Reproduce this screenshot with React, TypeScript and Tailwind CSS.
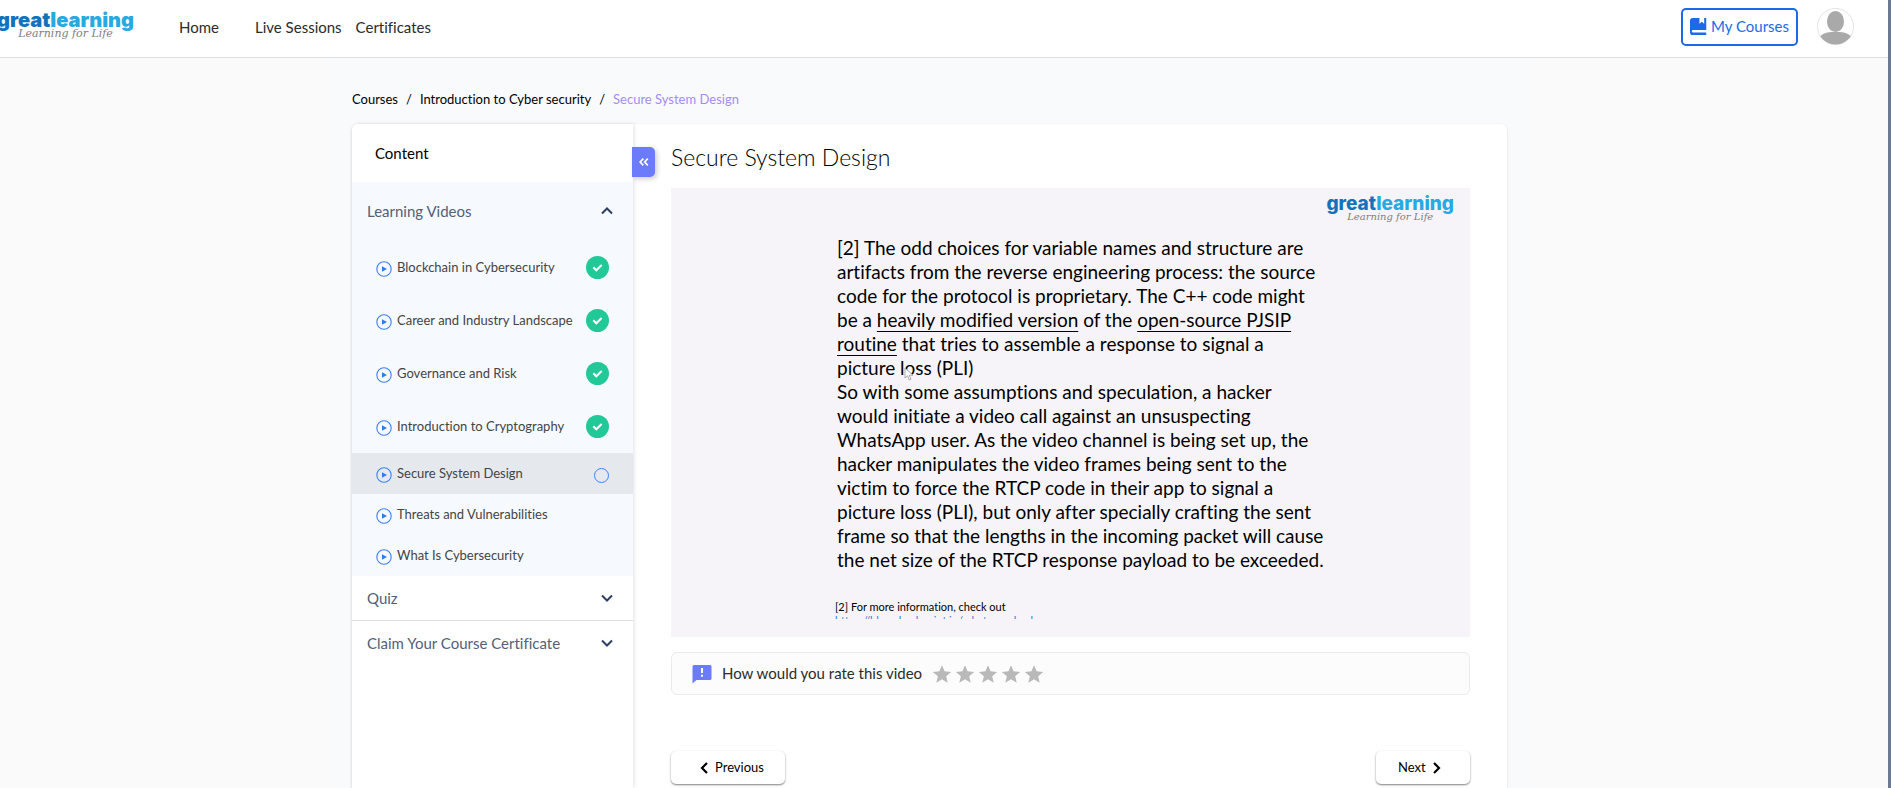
import { useState } from "react";

const videos = [
  { title: "Blockchain in Cybersecurity", done: true },
  { title: "Career and Industry Landscape", done: true },
  { title: "Governance and Risk", done: true },
  { title: "Introduction to Cryptography", done: true },
  { title: "Secure System Design", done: false },
  { title: "Threats and Vulnerabilities", done: false },
  { title: "What Is Cybersecurity", done: false },
];

function Brand({ large = false }: { large?: boolean }) {
  return (
    <span className="flex flex-col items-center whitespace-nowrap">
      <span
        className={
          large
            ? "font-['Inter',sans-serif] text-[20px] leading-[18px] font-black"
            : "font-['Inter',sans-serif] text-[19px] leading-[18px] font-extrabold"
        }
      >
        <span className="text-[#1173bb]">great</span>
        <span className="text-[#27a9e1]">learning</span>
      </span>
      <span
        className={
          large
            ? "font-['DejaVu_Serif',serif] text-[11px] leading-[10px] text-[#808080] italic"
            : "font-['DejaVu_Serif',serif] text-[10px] leading-2 text-[#808080] italic"
        }
      >
        Learning for Life
      </span>
    </span>
  );
}

function PlayIcon() {
  return (
    <svg viewBox="0 0 16 16" className="mt-1 size-4 shrink-0" aria-hidden="true">
      <circle cx="8" cy="8" r="7.2" fill="none" stroke="#3b82f6" strokeWidth="1.1" />
      <path d="M6 5.2v5.6L11 8z" fill="#2f7bf0" />
    </svg>
  );
}

function CheckBadge() {
  return (
    <svg viewBox="0 0 23 23" className="size-[23px] shrink-0" role="img" aria-label="Completed">
      <circle cx="11.5" cy="11.5" r="11.5" fill="#20c997" />
      <path d="M7.3 11.3l3 3L15.7 9" fill="none" stroke="#fff" strokeWidth="2" />
    </svg>
  );
}

function Chevron({ up = false }: { up?: boolean }) {
  return (
    <svg viewBox="0 0 12 8" className="h-2 w-3" fill="none" stroke="#2d3f63" strokeWidth="2" aria-hidden="true">
      <path d={up ? "M1 6.5l5-5 5 5" : "M1 1.5l5 5 5-5"} />
    </svg>
  );
}

function Section({ title, open, onToggle }: { title: string; open: boolean; onToggle: () => void }) {
  return (
    <button
      type="button"
      onClick={onToggle}
      aria-expanded={open}
      className="flex w-full items-center justify-between pr-5 pl-[15px] text-left text-[15px] leading-6 text-[#536079]"
    >
      {title}
      <Chevron up={open} />
    </button>
  );
}

function Star() {
  return (
    <svg viewBox="0 0 24 24" className="size-[22px]" fill="#b9b9b9" aria-hidden="true">
      <path d="M12 17.8 18.2 21.5l-1.6-7L22 9.7l-7.2-.6L12 2.5 9.2 9.1 2 9.7l5.5 4.8-1.7 7z" />
    </svg>
  );
}

export default function App() {
  const [open, setOpen] = useState("Learning Videos");
  const [current, setCurrent] = useState("Secure System Design");
  const toggle = (name: string) => setOpen(open === name ? "" : name);

  return (
    <div className="flex h-screen flex-col overflow-hidden border-r-[3px] border-[#6b7a90] bg-[#fafafa] font-['Lato',sans-serif] text-black [font-variant-ligatures:none]">
      <header className="flex h-[58px] shrink-0 items-center border-b border-[#dddfe2] bg-white pr-[34px]">
        <a href="#home" className="-ml-[3px] shrink-0 pb-[7px]" aria-label="Great Learning">
          <Brand large />
        </a>
        <nav className="flex pb-[2px] pl-[45px] text-[15px] text-[#2b2b2b]">
          <a href="#home" className="mr-9">Home</a>
          <a href="#live" className="mr-[14px]">Live Sessions</a>
          <a href="#certificates">Certificates</a>
        </nav>
        <a
          href="#courses"
          className="mb-1 ml-auto flex h-[38px] items-center gap-1 rounded-[5px] border-2 border-[#1b6be8] px-[7px] text-[15px] text-[#1b6be8]"
        >
          <svg viewBox="0 0 18 18" className="size-[17px]" fill="#1b6be8" aria-hidden="true">
            <path d="M3 0h7v6l2.5-2L15 6V0h2.2v12.6H3.3a1.3 1.3 0 0 0 0 2.8H17.200V18H3a3 3 0 0 1-3-3V3a3 3 0 0 1 3-3z" />
          </svg>
          My Courses
        </a>
        <button type="button" aria-label="Profile" className="mb-1 ml-[19px]">
          <svg viewBox="0 0 37 37" className="size-[37px]">
            <defs>
              <clipPath id="avatar">
                <circle cx="18.500" cy="18.500" r="18" />
              </clipPath>
            </defs>
            <circle cx="18.500" cy="18.500" r="18" fill="#fff" stroke="#e3e3e3" />
            <g clipPath="url(#avatar)" fill="#a9a9a9">
              <ellipse cx="18.500" cy="13.500" rx="8.500" ry="10.500" />
              <path d="M2 30c2-4 7-5.500 12-6h9c5 .5 10 2 12 6v7H2z" />
            </g>
          </svg>
        </button>
      </header>

      <div className="flex min-h-0 grow pr-[29px]">
        <div className="mx-auto flex w-full max-w-[1203px] flex-col bg-[#f8fafc] px-6">
          <nav aria-label="Breadcrumb" className="pt-[31px] pb-[15px]">
            <ol className="flex gap-2 text-[13px] leading-5">
              <li><a href="#courses">Courses</a></li>
              <li aria-hidden="true">/</li>
              <li><a href="#intro">Introduction to Cyber security</a></li>
              <li aria-hidden="true">/</li>
              <li aria-current="page" className="text-[#a78bfa]">Secure System Design</li>
            </ol>
          </nav>

          <div className="flex grow rounded-t-md bg-white shadow-[0_1px_3px_rgba(0,0,0,0.12)]">
            <aside className="relative w-[281px] shrink-0 rounded-tl-md bg-white shadow-[1px_0_4px_rgba(0,0,0,0.12)]">
              <h2 className="flex h-[58px] items-center pl-[23px] text-[15px]">Content</h2>
              <div className="bg-[#f6faff]">
                <div className="pt-[17px] pb-[18px]">
                  <Section title="Learning Videos" open={open === "Learning Videos"} onToggle={() => toggle("Learning Videos")} />
                </div>
                {open === "Learning Videos" && (
                  <ul>
                    {videos.map((v) => (
                      <li key={v.title}>
                        <button
                          type="button"
                          onClick={() => setCurrent(v.title)}
                          className={`flex w-full items-center pr-6 pb-px pl-6 text-left text-[13px] leading-5 text-[#444] ${v.done ? "h-[53px]" : "h-[41px]"} ${v.title === current ? "bg-[#e5e8ed]" : ""}`}
                        >
                          <PlayIcon />
                          <span className="grow pl-[5px]">{v.title}</span>
                          {v.done && <CheckBadge />}
                          {v.title === current && (
                            <span className="mt-1 size-[15px] rounded-full border border-[#3b82f6]" />
                          )}
                        </button>
                      </li>
                    ))}
                  </ul>
                )}
              </div>
              <div className="border-b border-[#dcdee2] py-[10px]">
                <Section title="Quiz" open={open === "Quiz"} onToggle={() => toggle("Quiz")} />
              </div>
              <div className="py-[10px]">
                <Section title="Claim Your Course Certificate" open={open === "Claim"} onToggle={() => toggle("Claim")} />
              </div>
              <button
                type="button"
                aria-label="Collapse content"
                className="absolute top-[23px] -right-[22px] flex h-[30px] w-[23px] items-center justify-center rounded-r-[5px] bg-[#6b7bfa] shadow-[2px_2px_5px_rgba(0,0,0,0.2)]"
              >
                <svg viewBox="0 0 10 8" className="h-2 w-[10px]" fill="none" stroke="#fff" strokeWidth="1.700" aria-hidden="true">
                  <path d="M4.300 .7 1.200 4l3.100 3.300M8.800 .7 5.700 4l3.100 3.300" />
                </svg>
              </button>
            </aside>

            <main className="min-w-0 grow pr-[37px] pl-[38px]">
              <h1 className="pt-[17px] pb-[15px] text-[23px] leading-8 font-light">Secure System Design</h1>
              <section aria-label="Video" className="relative h-[449px] overflow-hidden bg-[#f6f4f8]">
                <div className="absolute top-[7px] right-4">
                  <Brand />
                </div>
                <div className="pt-12 pl-[166px] text-[19px] leading-6 whitespace-nowrap">
                  <p>
                    [2] The odd choices for variable names and structure are<br />
                    artifacts from the reverse engineering process: the source<br />
                    code for the protocol is proprietary. The C++ code might<br />
                    be a <u className="underline-offset-4">heavily modified version</u> of the <u className="underline-offset-4">open-source PJSIP</u><br />
                    <u className="underline-offset-4">routine</u> that tries to assemble a response to signal a<br />
                    picture loss (PLI)
                  </p>
                  <p>
                    So with some assumptions and speculation, a hacker<br />
                    would initiate a video call against an unsuspecting<br />
                    WhatsApp user. As the video channel is being set up, the<br />
                    hacker manipulates the video frames being sent to the<br />
                    victim to force the RTCP code in their app to signal a<br />
                    picture loss (PLI), but only after specially crafting the sent<br />
                    frame so that the lengths in the incoming packet will cause<br />
                    the net size of the RTCP response payload to be exceeded.
                  </p>
                </div>
                <div className="mt-7 h-[19px] overflow-hidden pl-[164px] text-[11px] leading-[14px]">
                  <p>[2] For more information, check out</p>
                  <a href="#reference" className="text-[#2f7fd0]">https://blog.checkpoint.io/whatsapp-hack</a>
                </div>
                <svg viewBox="0 0 10 14" className="absolute top-[179px] left-[233px] h-[14px] w-[10px]" aria-hidden="true">
                  <path d="M1 1v10l2.500-2.300L5.200 13l1.800-.8-1.800-4H9z" fill="#fff" stroke="#999" strokeWidth=".8" />
                </svg>
              </section>

              <div className="mt-[15px] flex h-[43px] items-center rounded-md border border-[#ebebeb] bg-[#fcfcfc] pl-5">
                <svg viewBox="0 0 20 20" className="size-5" aria-hidden="true">
                  <path d="M2 1h16a1.500 1.500 0 0 1 1.500 1.500v12A1.500 1.500 0 0 1 18 16H4.500L.5 19.500v-17A1.500 1.500 0 0 1 2 1z" fill="#6b7bfa" />
                  <path d="M9 4h2v5H9zM9 10.800h2v2H9z" fill="#fff" />
                </svg>
                <span className="pl-[10px] text-[15px] text-[#2b2b2b]">How would you rate this video</span>
                <div className="flex pl-[9px]">
                  {[1, 2, 3, 4, 5].map((n) => (
                    <button key={n} type="button" aria-label={`Rate ${n} of 5`} className="w-[23px]">
                      <Star />
                    </button>
                  ))}
                </div>
              </div>

              <div className="mt-14 flex justify-between text-[13px]">
                <button type="button" className="flex h-[33px] w-[114px] items-center gap-[7px] rounded-[5px] bg-white pl-[29px] shadow-[0_1px_2px_rgba(0,0,0,0.5)]">
                  <svg viewBox="0 0 8 12" className="h-3 w-2" fill="none" stroke="#000" strokeWidth="2.200" aria-hidden="true">
                    <path d="M7 1 2 6l5 5" />
                  </svg>
                  Previous
                </button>
                <button type="button" className="flex h-[33px] w-[94px] items-center gap-[7px] rounded-[5px] bg-white pl-[22px] shadow-[0_1px_2px_rgba(0,0,0,0.5)]">
                  Next
                  <svg viewBox="0 0 8 12" className="h-3 w-2" fill="none" stroke="#000" strokeWidth="2.200" aria-hidden="true">
                    <path d="m1 1 5 5-5 5" />
                  </svg>
                </button>
              </div>
            </main>
          </div>
        </div>
      </div>
    </div>
  );
}
